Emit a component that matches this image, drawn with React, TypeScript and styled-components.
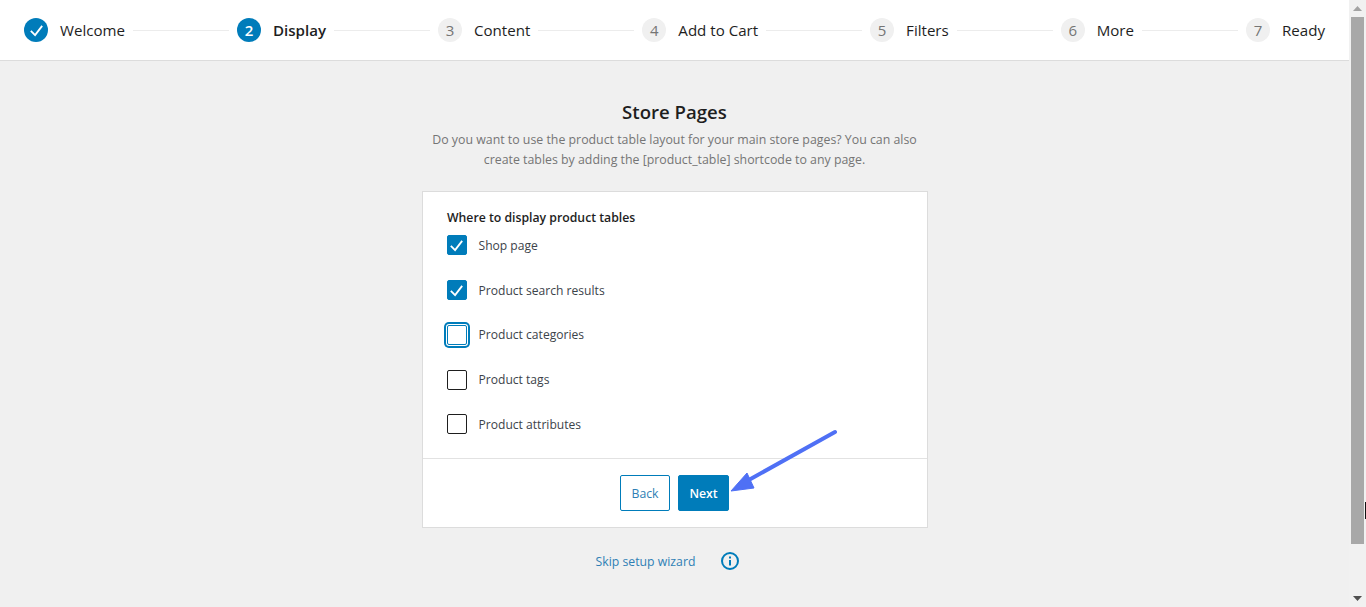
import React from "react";
import styled, { createGlobalStyle } from "styled-components";

const Global = createGlobalStyle`
  html, body { margin: 0; padding: 0; height: 100%; overflow: hidden; }
  body { font-family: "Open Sans", "Noto Sans", "Liberation Sans", sans-serif; background: #f0f0f0; color: #1e1e1e; }
  #root { height: 100%; }
`;

const Shell = styled.div`
  display: flex;
  height: 607px;
  width: 1366px;
`;
const Page = styled.div`
  flex: 1;
  min-width: 0;
  display: flex;
  flex-direction: column;
  background: #f0f0f0;
`;
const Stepper = styled.header`
  box-sizing: border-box;
  height: 61px;
  flex: none;
  display: flex;
  align-items: center;
  padding: 0 24px;
  background: #fff;
  border-bottom: 1px solid #dcdcdc;
`;
const Step = styled.div`
  display: flex;
  align-items: center;
  gap: 12px;
  flex: none;
`;
const Dot = styled.span<{ $active?: boolean }>`
  width: 24px;
  height: 24px;
  border-radius: 50%;
  display: flex;
  align-items: center;
  justify-content: center;
  background: ${(p) => (p.$active ? "#007cba" : "#f0f0f0")};
  color: ${(p) => (p.$active ? "#fff" : "#757575")};
  font-size: 15px;
  font-weight: ${(p) => (p.$active ? 600 : 400)};
`;
const StepLabel = styled.span<{ $active?: boolean }>`
  font-size: 15.1px;
  line-height: 24px;
  font-weight: ${(p) => (p.$active ? 600 : 400)};
  color: #1e1e1e;
`;
const Connector = styled.span`
  flex: 1;
  height: 1px;
  margin: 0 8px;
  background: #ececec;
`;
const Main = styled.main`
  flex: 1;
  position: relative;
  display: flex;
  flex-direction: column;
  align-items: center;
`;
const Title = styled.h1`
  margin: 38px 0 0;
  font-size: 18.6px;
  line-height: 26px;
  font-weight: 600;
  color: #1e1e1e;
`;
const Intro = styled.p`
  margin: 5px 0 0;
  width: 506px;
  text-align: center;
  font-size: 12.35px;
  line-height: 20px;
  color: #757575;
`;
const Card = styled.section`
  box-sizing: border-box;
  margin-top: 21px;
  width: 506px;
  height: 337px;
  background: #fff;
  border: 1px solid #dcdcdc;
  display: flex;
  flex-direction: column;
`;
const Fields = styled.div`
  flex: 1;
  padding: 17.3px 24px 0;
`;
const Legend = styled.div`
  font-size: 12.25px;
  line-height: 18px;
  font-weight: 600;
  color: #1e1e1e;
  margin-bottom: 8px;
  margin-left: 0.5px;
`;
const Row = styled.label`
  display: flex;
  align-items: center;
  gap: 12px;
  height: 20px;
  margin-bottom: 24.75px;
  font-size: 12.1px;
  color: #3c434a;
  &:last-child {
    margin-bottom: 0;
  }
`;
const Box = styled.span<{ $checked?: boolean; $focus?: boolean }>`
  box-sizing: border-box;
  width: 20px;
  height: 20px;
  flex: none;
  border-radius: 2px;
  display: flex;
  align-items: center;
  justify-content: center;
  border: 1px solid ${(p) => (p.$checked ? "#007cba" : p.$focus ? "#007cba" : "#1e1e1e")};
  background: ${(p) => (p.$checked ? "#007cba" : "#fff")};
  box-shadow: ${(p) => (p.$focus ? "0 0 0 1px #fff, 0 0 0 3px #007cba" : "none")};
`;
const Footer = styled.div`
  flex: none;
  height: 69px;
  box-sizing: border-box;
  border-top: 1px solid #e2e2e2;
  display: flex;
  justify-content: center;
  align-items: center;
  gap: 8px;
`;
const Button = styled.button<{ $primary?: boolean }>`
  box-sizing: border-box;
  height: 36px;
  width: ${(p) => (p.$primary ? "51px" : "50px")};
  padding: 0;
  border-radius: 2px;
  border: 1px solid #007cba;
  background: ${(p) => (p.$primary ? "#007cba" : "#fff")};
  color: ${(p) => (p.$primary ? "#fff" : "#2f7fb5")};
  font-family: inherit;
  font-size: 12.25px;
  font-weight: ${(p) => (p.$primary ? 600 : 400)};
`;
const SkipRow = styled.div`
  margin-top: 23px;
  margin-right: 13px;
  display: flex;
  align-items: center;
  gap: 25px;
  height: 20px;
`;
const SkipLink = styled.a`
  font-size: 12.25px;
  color: #2f7fb5;
`;
const ArrowMark = styled.svg`
  position: absolute;
  left: 725px;
  top: 365px;
`;
const ScrollBar = styled.aside`
  width: 17px;
  flex: none;
  background: #f1f1f1;
  display: flex;
  flex-direction: column;
  position: relative;
`;
const ScrollButton = styled.div`
  height: 17px;
  flex: none;
  display: flex;
  align-items: center;
  justify-content: center;
`;
const ScrollTrack = styled.div`
  flex: 1;
`;
const ScrollThumb = styled.div`
  height: 527px;
  margin: 0 2px 0 2px;
  background: #a8a8a8;
`;
const CursorMark = styled.span`
  position: absolute;
  right: 0;
  top: 502px;
  width: 1px;
  height: 17px;
  background: #111;
`;

const steps = ["Welcome", "Display", "Content", "Add to Cart", "Filters", "More", "Ready"];
const fields = [
  { label: "Shop page", checked: true },
  { label: "Product search results", checked: true },
  { label: "Product categories", focus: true },
  { label: "Product tags" },
  { label: "Product attributes" },
];

const Tick = ({ size }: { size: number }) => (
  <svg width={size} height={size} viewBox="0 0 24 24" fill="none" stroke="#fff" strokeWidth="2.6">
    <path d="M4 12.5 L10 18.5 L20 5.5" />
  </svg>
);

export default function App() {
  return (
    <Shell>
      <Global />
      <Page>
        <Stepper>
          {steps.map((s, i) => (
            <React.Fragment key={s}>
              <Step>
                <Dot $active={i < 2}>{i === 0 ? <Tick size={17} /> : i + 1}</Dot>
                <StepLabel $active={i === 1}>{s}</StepLabel>
              </Step>
              {i < steps.length - 1 && <Connector />}
            </React.Fragment>
          ))}
        </Stepper>
        <Main>
          <Title>Store Pages</Title>
          <Intro>
            Do you want to use the product table layout for your main store pages? You can also
            <br />
            create tables by adding the [product_table] shortcode to any page.
          </Intro>
          <Card>
            <Fields>
              <Legend>Where to display product tables</Legend>
              {fields.map((f) => (
                <Row key={f.label}>
                  <Box $checked={f.checked} $focus={f.focus}>
                    {f.checked && <Tick size={17} />}
                  </Box>
                  {f.label}
                </Row>
              ))}
            </Fields>
            <Footer>
              <Button>Back</Button>
              <Button $primary>Next</Button>
            </Footer>
          </Card>
          <SkipRow>
            <SkipLink>Skip setup wizard</SkipLink>
            <svg width="20" height="20" viewBox="0 0 20 20" fill="none">
              <circle cx="10" cy="10" r="8" stroke="#007cba" strokeWidth="2" />
              <rect x="9" y="9" width="2" height="5.5" fill="#007cba" />
              <rect x="9" y="5.5" width="2" height="2" fill="#007cba" />
            </svg>
          </SkipRow>
          <ArrowMark width="120" height="75" viewBox="0 0 120 75">
            <path d="M110 6 L22 55" stroke="#4f70f5" strokeWidth="4" strokeLinecap="round" />
            <path d="M6 65 L22 47 L29 62 Z" fill="#4f70f5" stroke="#4f70f5" strokeLinejoin="round" />
          </ArrowMark>
        </Main>
      </Page>
      <ScrollBar>
        <ScrollButton>
          <svg width="9" height="5" viewBox="0 0 9 5"><path d="M0 5 L4.5 0 L9 5 Z" fill="#a3a3a3" /></svg>
        </ScrollButton>
        <ScrollThumb />
        <ScrollTrack />
        <ScrollButton>
          <svg width="9" height="5" viewBox="0 0 9 5"><path d="M0 0 L4.5 5 L9 0 Z" fill="#505050" /></svg>
        </ScrollButton>
        <CursorMark />
      </ScrollBar>
    </Shell>
  );
}
